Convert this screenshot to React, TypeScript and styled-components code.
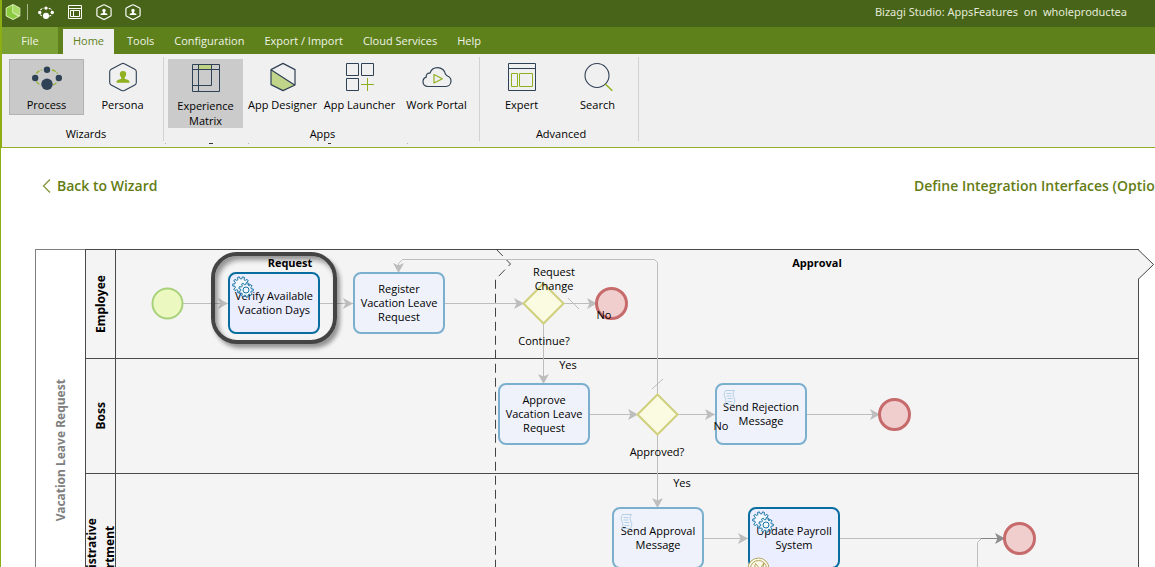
import React from "react";
import styled, { createGlobalStyle, css } from "styled-components";

const GlobalStyle = createGlobalStyle`
  *, *::before, *::after { box-sizing: border-box; }
  html, body { margin: 0; padding: 0; }
  body {
    font-family: "Open Sans", "Noto Sans", sans-serif;
    font-size: 11px;
    line-height: 14px;
    color: #000;
    background: #fff;
    overflow: hidden;
  }
  button { font: inherit; color: inherit; border: 0; background: none; padding: 0; }
  a { color: inherit; text-decoration: none; }
  svg { display: block; flex: none; }
`;

const NAVY = "#2f4154";
const GREEN = "#8fb01f";

const Shell = styled.div`
  display: flex;
  flex-direction: column;
  height: 100vh;
  overflow: hidden;
`;

const Header = styled.header`
  border-left: 2px solid #8cae14;
`;

const TitleBar = styled.div`
  display: flex;
  align-items: center;
  justify-content: space-between;
  height: 27px;
  padding: 0 28px 4px 3px;
  background: #486418;
`;

const QuickAccess = styled.div`
  display: flex;
  align-items: center;
  gap: 13px;
`;

const QuickButton = styled.button`
  width: 16px;
  height: 16px;
`;

const Divider = styled.span`
  width: 1px;
  height: 16px;
  margin: 0 -3px 0 -7px;
  background: #a9b78d;
`;

const WindowTitle = styled.h1`
  margin: 0;
  font-family: "Noto Sans", "Open Sans", sans-serif;
  font-size: 11px;
  font-weight: 400;
  color: #e4ead9;
  white-space: pre;
`;

const TabBar = styled.nav`
  display: flex;
  align-items: flex-end;
  height: 27px;
  background: #5e811c;
`;

const Tab = styled.button<{ $kind?: "file" | "active" }>`
  height: 25px;
  padding: 0 10px 2px;
  color: #f0f4e6;
  white-space: nowrap;
  ${(p) => p.$kind === "file" && css`
    height: 27px;
    width: 56px;
    margin-right: 5px;
    padding: 0;
    background: #7a9f35;
  `}
  ${(p) => p.$kind === "active" && css`
    width: 51px;
    margin-right: 3px;
    padding: 0 0 2px;
    background: #f0f0f0;
    color: #5e811c;
  `}
`;

const Ribbon = styled.div`
  position: relative;
  display: flex;
  height: 94px;
  padding-top: 3px;
  background: #f0f0f0;
  border-bottom: 1px solid #94ae2e;
`;

const RibbonGroup = styled.section<{ $wide: boolean }>`
  display: flex;
  flex-direction: column;
  justify-content: space-between;
  height: 84px;
  padding: 2px ${(p) => (p.$wide ? 5 : 3)}px 1px 4px;
  border-right: 1px solid #d2d2d2;
  &:first-child { padding-left: 7px; }
`;

const RibbonItems = styled.div<{ $wide: boolean }>`
  display: flex;
  align-items: flex-start;
  gap: ${(p) => (p.$wide ? 2 : 1)}px;
`;

const RibbonButton = styled.button<{ $state?: "pressed" | "selected" }>`
  display: flex;
  flex-direction: column;
  align-items: center;
  gap: 5px;
  width: 75px;
  min-height: 56px;
  padding: 3px 0 0;
  line-height: 15px;
  white-space: nowrap;
  ${(p) => p.$state === "pressed" && css`
    background: #c9c9c9;
    box-shadow: inset 0 0 0 1px #b2b2b2;
  `}
  ${(p) => p.$state === "selected" && css`
    gap: 6px;
    height: 69px;
    background: #cbcbcb;
    white-space: normal;
  `}
`;

const GroupLabel = styled.h2`
  margin: 0;
  padding-left: 3px;
  font-size: 11px;
  font-weight: 400;
  line-height: 12px;
  text-align: center;
`;

const RibbonMarks = styled.svg`
  position: absolute;
  left: 0;
  bottom: 2px;
`;

const Main = styled.main`
  flex: 1;
  min-height: 0;
  border-left: 1px solid #8cae14;
  overflow: hidden;
`;

const StepNav = styled.nav`
  display: flex;
  align-items: center;
  justify-content: space-between;
  height: 76px;
  margin-bottom: 25px;
  padding-left: 41px;
  font-size: 14px;
  line-height: 18px;
  font-weight: 600;
  color: #637c14;
`;

const BackLink = styled.a`
  display: flex;
  align-items: center;
  gap: 6px;
`;

const NextLink = styled.a`
  width: 241px;
  white-space: nowrap;
  overflow: hidden;
`;

const Canvas = styled.div`
  position: relative;
  width: 1120px;
  margin-left: 34px;
`;

const Pool = styled.section`
  display: flex;
  width: 1104px;
  border: 1px solid #808080;
  border-right: 0;
`;

const VerticalTitle = styled.h3<{ $muted?: boolean }>`
  display: flex;
  align-items: center;
  justify-content: center;
  flex: none;
  width: ${(p) => (p.$muted ? 49 : 30)}px;
  margin: 0;
  font-family: "Noto Sans", "Open Sans", sans-serif;
  font-size: 12px;
  line-height: 18px;
  font-weight: 700;
  color: ${(p) => (p.$muted ? "#808080" : "#000")};
  text-align: center;
  border-right: ${(p) => (p.$muted ? "0" : "1px solid #4a4a4a")};
  span { writing-mode: vertical-rl; transform: rotate(180deg); white-space: pre; }
`;

const Lanes = styled.div`
  flex: 1;
  margin-top: -1px;
  border: 1px solid #4a4a4a;
  border-bottom: 0;
  background: #f4f4f4;
`;

const Lane = styled.div<{ $height: number }>`
  display: flex;
  height: ${(p) => p.$height}px;
  border-bottom: 1px solid #4a4a4a;
`;

const Layer = styled.svg`
  position: absolute;
  left: 0;
  top: 0;
`;

const Task = styled.div<{ $x: number; $y: number; $strong?: boolean }>`
  position: absolute;
  left: ${(p) => p.$x}px;
  top: ${(p) => p.$y}px;
  display: flex;
  align-items: center;
  justify-content: center;
  width: 92px;
  height: 62px;
  border: 2px solid ${(p) => (p.$strong ? "#096d9f" : "#7bafce")};
  border-radius: 8px;
  background: ${(p) => (p.$strong ? "#ebeeff" : "#eff2fb")};
  text-align: center;
  white-space: pre;
`;

const TaskMarker = styled.svg`
  position: absolute;
  left: 2px;
  top: 2px;
`;

const Label = styled.span<{ $x: number; $y: number; $bold?: boolean }>`
  position: absolute;
  left: ${(p) => p.$x}px;
  top: ${(p) => p.$y}px;
  transform: translate(-50%, -50%);
  text-align: center;
  white-space: pre;
  font-weight: ${(p) => (p.$bold ? 700 : 400)};
`;

const Highlight = styled.div`
  position: absolute;
  left: 176px;
  top: 3px;
  width: 126px;
  height: 92px;
  border: 4px solid #444;
  border-radius: 26px;
  box-shadow: 3px 4px 4px rgba(0, 0, 0, 0.4), inset 3px 4px 5px rgba(0, 0, 0, 0.4);
`;

function ProcessIcon({ size = 30, mono = false }: { size?: number; mono?: boolean }) {
  const dot = mono ? "#fff" : NAVY;
  return (
    <svg width={size} height={size} viewBox="0 0 30 30" aria-hidden="true">
      <g fill="none" stroke={mono ? "#fff" : GREEN} strokeWidth={mono ? 2 : 1.3}>
        <path d="M4.5 11.5Q6 9 10 7.8M20 7.8Q24 9 25.5 11.5" strokeDasharray="4 1.5" />
        <path d="M4.5 19.5Q6 22 9 23M21 23Q24 22 25.5 19.5" strokeDasharray="4 1.5" />
      </g>
      <g fill={dot}>
        <circle cx="15" cy="7.7" r="3.2" />
        <circle cx="3.2" cy="16" r="3.2" />
        <circle cx="26.8" cy="16" r="3.2" />
        <circle cx="15" cy="22.3" r="5.7" />
      </g>
    </svg>
  );
}

function PersonaIcon({ size = 30, mono = false }: { size?: number; mono?: boolean }) {
  return (
    <svg width={size} height={size} viewBox="0 0 30 30" aria-hidden="true">
      <path
        d="M13.6 1.8Q15 1 16.4 1.8L26.8 7.2Q28.3 8 28.3 9.8V20.4Q28.3 22.2 26.8 23L16.4 28.4Q15 29.2 13.6 28.4L3.2 23Q1.7 22.2 1.7 20.4V9.8Q1.7 8 3.2 7.2Z"
        fill="none"
        stroke={mono ? "#fff" : NAVY}
        strokeWidth={mono ? 2.2 : 1.1}
      />
      <path
        d="M15 9a3.2 3.2 0 0 1 3.2 3.2c0 1.5-.8 2.3-1.5 3.2v1.4l3.6 1.2q1.2.6 1.2 2.8h-13q0-2.2 1.2-2.8l3.6-1.2v-1.4c-.7-.9-1.5-1.7-1.5-3.2A3.2 3.2 0 0 1 15 9Z"
        fill={mono ? "#fff" : GREEN}
      />
    </svg>
  );
}

function WindowIcon() {
  return (
    <svg width="16" height="16" viewBox="0 0 16 16" fill="none" stroke="#fff" aria-hidden="true">
      <path d="M1.5 1.5h13v13h-13zM1.5 4.5h13M3.5 6.5h3v6h-3zM6.5 6.5h6v6h-6z" />
    </svg>
  );
}

function MatrixIcon() {
  return (
    <svg width="30" height="30" viewBox="0 0 30 30" aria-hidden="true">
      <path d="M7.5 2.5h13v5h-13z" fill="#bfd383" />
      <path
        d="M1.5 2.5h27v27h-27zM1.5 7.5h27M7.5 2.5v27M20.5 2.5v21h-19"
        fill="none"
        stroke={NAVY}
      />
    </svg>
  );
}

function DesignerIcon() {
  return (
    <svg width="30" height="30" viewBox="0 0 30 30" strokeLinejoin="round" aria-hidden="true">
      <path d="M3 8L27 23.5L15 28.6L3 22.6Z" fill="#c0d48a" />
      <path d="M15 1.4L27 7.6V23L15 28.6L3 22.6V7.6ZM3 7.8L27 23.2" fill="none" stroke={NAVY} strokeWidth="1.2" />
    </svg>
  );
}

function LauncherIcon() {
  return (
    <svg width="30" height="30" viewBox="0 0 30 30" fill="none" aria-hidden="true">
      <path d="M1.5 1.5h12v12h-12zM16.5 1.5h12v12h-12zM1.5 16.5h12v12h-12z" stroke={NAVY} />
      <path d="M22.5 16v13M16 22.5h13" stroke={GREEN} />
    </svg>
  );
}

function CloudIcon() {
  return (
    <svg width="30" height="30" viewBox="0 0 30 30" fill="none" strokeLinejoin="round" aria-hidden="true">
      <path
        d="M6 24.5C2.8 24.5 1 22.3 1 19.8C1 17.4 2.5 15.7 4.3 15.2C3.6 12.6 5.6 10.8 8 11.2C9 7.6 12.2 5.6 15.6 5.6C19.6 5.6 22.9 8.4 23.4 12C24 13 24.5 13.4 25.6 14C28 15 29 17 29 19C29 22.2 26.8 24.5 23.8 24.5Z"
        stroke={NAVY}
        strokeWidth="1.2"
      />
      <path d="M12 12.5V21L20.4 16.8Z" stroke={GREEN} strokeWidth="1.2" />
    </svg>
  );
}

function ExpertIcon() {
  return (
    <svg width="30" height="30" viewBox="0 0 30 30" fill="none" aria-hidden="true">
      <path d="M1.5 1.5h27v27h-27zM1.5 6.5h27" stroke={NAVY} />
      <path d="M4.5 11.5h6v13h-6zM12.5 11.5h13v13h-13z" stroke={GREEN} />
    </svg>
  );
}

function SearchIcon() {
  return (
    <svg width="30" height="30" viewBox="0 0 30 30" fill="none" aria-hidden="true">
      <circle cx="14" cy="13.5" r="12" stroke={NAVY} strokeWidth="1.1" />
      <path d="M22.3 22L29.3 28.7" stroke={GREEN} strokeWidth="1.5" />
    </svg>
  );
}

function Logo() {
  return (
    <svg width="16" height="16" viewBox="0 0 16 16" aria-hidden="true">
      <path d="M8 .5L14.8 4V12L8 15.5L1.2 12V4Z" fill="#8bcb3f" stroke="#dff0c0" />
      <path d="M8 1V8.5L14 12" fill="none" stroke="#e9f6d6" strokeWidth="1.3" />
      <path d="M8 1L14.3 4.3V11.5L8 8.2Z" fill="#a9dc66" />
    </svg>
  );
}

const gearOutline = (cx: number, cy: number, outer: number, inner: number, teeth: number) => {
  const step = (Math.PI * 2) / teeth;
  const point = (r: number, a: number) => `${(cx + r * Math.cos(a)).toFixed(2)} ${(cy + r * Math.sin(a)).toFixed(2)}`;
  const parts: string[] = [];
  for (let i = 0; i < teeth; i++) {
    const a = i * step;
    parts.push(point(inner, a - step * 0.3), point(outer, a - step * 0.2), point(outer, a + step * 0.2), point(inner, a + step * 0.3));
  }
  return `M${parts.join("L")}Z`;
};

function GearMarker() {
  return (
    <TaskMarker width="22" height="22" viewBox="0 0 22 22" fill="#f4f8ff" stroke="#1974a5" aria-hidden="true">
      <path d={gearOutline(9, 9, 8.3, 6.2, 10)} />
      <path d={gearOutline(14, 14, 7.3, 5.4, 9)} />
      <circle cx="14" cy="14" r="3" />
    </TaskMarker>
  );
}

function ScriptMarker() {
  return (
    <TaskMarker width="22" height="22" viewBox="0 0 22 22" fill="none" stroke="#b4d0e4" aria-hidden="true">
      <path d="M6.5 3.5H15.5C13.5 6 13.8 8 15 10.5C16.2 13 16 15 14.5 17.5H5.5C7.5 15 7.2 13 6 10.5C4.8 8 5 6 6.5 3.5Z" />
      <path d="M7.5 6.5h5M7.5 9h5M8.5 11.5h5M8.5 14.5h5" />
    </TaskMarker>
  );
}

function Arrow({ x, y, down, color = "#bdbdbd" }: { x: number; y: number; down?: boolean; color?: string }) {
  return (
    <path
      d="M0 0L-10 -5.5L-7.5 0L-10 5.5Z"
      transform={`translate(${x} ${y})${down ? " rotate(90)" : ""}`}
      fill={color}
      stroke="none"
    />
  );
}

const quickActions = [
  { name: "Process wizard", icon: <ProcessIcon size={16} mono /> },
  { name: "Expert view", icon: <WindowIcon /> },
  { name: "Persona", icon: <PersonaIcon size={16} mono /> },
  { name: "Stakeholders", icon: <PersonaIcon size={16} mono /> },
];

const ribbonGroups: {
  title: string;
  items: { label: string; icon: React.ReactNode; state?: "pressed" | "selected" }[];
}[] = [
  {
    title: "Wizards",
    items: [
      { label: "Process", icon: <ProcessIcon />, state: "pressed" },
      { label: "Persona", icon: <PersonaIcon /> },
    ],
  },
  {
    title: "Apps",
    items: [
      { label: "Experience Matrix", icon: <MatrixIcon />, state: "selected" },
      { label: "App Designer", icon: <DesignerIcon /> },
      { label: "App Launcher", icon: <LauncherIcon /> },
      { label: "Work Portal", icon: <CloudIcon /> },
    ],
  },
  {
    title: "Advanced",
    items: [
      { label: "Expert", icon: <ExpertIcon /> },
      { label: "Search", icon: <SearchIcon /> },
    ],
  },
];

const lanes = [
  { name: "Employee", height: 109 },
  { name: "Boss", height: 115 },
  { name: "Administrative\nDepartment", height: 177 },
];

const tasks: { x: number; y: number; text: string; marker?: "gear" | "script" }[] = [
  { x: 193, y: 23, text: "Verify Available\nVacation Days", marker: "gear" },
  { x: 318, y: 23, text: "Register\nVacation Leave\nRequest" },
  { x: 463, y: 134, text: "Approve\nVacation Leave\nRequest" },
  { x: 680, y: 134, text: "Send Rejection\nMessage", marker: "script" },
  { x: 577, y: 258, text: "Send Approval\nMessage", marker: "script" },
  { x: 713, y: 258, text: "Update Payroll\nSystem", marker: "gear" },
];

const labels = [
  { x: 519, y: 30, text: "Request\nChange" },
  { x: 509, y: 92, text: "Continue?" },
  { x: 569, y: 66, text: "No" },
  { x: 533, y: 116, text: "Yes" },
  { x: 686, y: 177, text: "No" },
  { x: 622, y: 203, text: "Approved?" },
  { x: 647, y: 234, text: "Yes" },
];

function Diagram() {
  return (
    <Canvas>
      <Pool aria-label="Vacation Leave Request">
        <VerticalTitle $muted><span>Vacation Leave Request</span></VerticalTitle>
        <Lanes>
          {lanes.map((lane) => (
            <Lane key={lane.name} $height={lane.height}>
              <VerticalTitle><span>{lane.name}</span></VerticalTitle>
            </Lane>
          ))}
        </Lanes>
      </Pool>

      <Layer width="1120" height="402" viewBox="0 0 1120 402" fill="none" aria-hidden="true">
        <path d="M1103 .5L1118.5 15.5L1103 30.5Z" fill="#f4f4f4" />
        <path d="M1103.5 1V30" stroke="#f4f4f4" strokeWidth="2" />
        <path d="M1103 .5L1118.5 15.5L1103 30.5" stroke="#444" />
        <path d="M461.5 .5L475.5 15L460.5 30.5V402" stroke="#444" strokeDasharray="9 5" />
        <g stroke="#bdbdbd">
          <path d="M148 54.5H193M285 54.5H318M410 54.5H488M529 54.5H560M508.5 75V134" />
          <path d="M555 165.5H602M643 165.5H680M772 165.5H844M622.5 186V258" />
          <path d="M622.5 145V13.5L619.5 10.5H367.5L363.5 14.5V23" />
          <path d="M533 49L544 60M617 140L628 130M669 289.5H713M805 289.5H946M942.5 402V293.5L946.5 289.5" />
        </g>
        <path d="M946 289.5H969" stroke="#858585" />
        <Arrow x={193} y={54.5} />
        <Arrow x={318} y={54.5} />
        <Arrow x={489} y={54.5} />
        <Arrow x={562} y={54.5} />
        <Arrow x={603} y={165.5} />
        <Arrow x={680} y={165.5} />
        <Arrow x={845} y={165.5} />
        <Arrow x={713} y={289.5} />
        <Arrow x={970} y={289.5} color="#8c8c8c" />
        <Arrow x={363.5} y={24} down />
        <Arrow x={508.5} y={135} down />
        <Arrow x={622.5} y={259} down />
        <g fill="#fafbe0" stroke="#cfcf7e" strokeWidth="2">
          <path d="M508.5 34.5L528.5 54.5L508.5 74.5L488.5 54.5Z" />
          <path d="M622.5 145.5L642.5 165.5L622.5 185.5L602.5 165.5Z" />
        </g>
        <circle cx="132.5" cy="54.5" r="15" fill="#ebf9c1" stroke="#a8d17b" strokeWidth="2" />
        <g fill="#f1cece" stroke="#c66a6b" strokeWidth="3">
          <circle cx="576.5" cy="54.5" r="15" />
          <circle cx="859.5" cy="165.5" r="15" />
          <circle cx="984.5" cy="289.5" r="15" />
        </g>
      </Layer>

      {tasks.map((t) => (
        <Task key={t.text} $x={t.x} $y={t.y} $strong={t.marker === "gear"}>
          {t.text}
          {t.marker === "gear" && <GearMarker />}
          {t.marker === "script" && <ScriptMarker />}
        </Task>
      ))}

      <Layer width="1120" height="402" viewBox="0 0 1120 402" fill="#fbf8e6" stroke="#b3a763" aria-hidden="true">
        <circle cx="723.5" cy="319.5" r="10.5" />
        <circle cx="723.5" cy="319.5" r="8" />
        <path d="M718 325L720.5 314.5L725 320L729 314L726.5 325L722 320Z" />
      </Layer>

      <Label $x={255} $y={14} $bold>Request</Label>
      <Label $x={782} $y={14} $bold>Approval</Label>
      {labels.map((l) => (
        <Label key={`${l.text}-${l.x}`} $x={l.x} $y={l.y}>{l.text}</Label>
      ))}
      <Highlight />
    </Canvas>
  );
}

export default function App() {
  return (
    <Shell>
      <GlobalStyle />
      <Header>
        <TitleBar>
          <QuickAccess>
            <Logo />
            <Divider />
            {quickActions.map((a) => (
              <QuickButton key={a.name} type="button" aria-label={a.name}>{a.icon}</QuickButton>
            ))}
          </QuickAccess>
          <WindowTitle>{"Bizagi Studio: AppsFeatures  on  wholeproductea"}</WindowTitle>
        </TitleBar>
        <TabBar>
          <Tab type="button" $kind="file">File</Tab>
          <Tab type="button" $kind="active">Home</Tab>
          {["Tools", "Configuration", "Export / Import", "Cloud Services", "Help"].map((t) => (
            <Tab key={t} type="button">{t}</Tab>
          ))}
        </TabBar>
        <Ribbon>
          {ribbonGroups.map((g) => (
            <RibbonGroup key={g.title} $wide={g.items.length > 2}>
              <RibbonItems $wide={g.items.length > 2}>
                {g.items.map((item) => (
                  <RibbonButton key={item.label} type="button" $state={item.state}>
                    {item.icon}
                    <span>{item.label}</span>
                  </RibbonButton>
                ))}
              </RibbonItems>
              <GroupLabel>{g.title}</GroupLabel>
            </RibbonGroup>
          ))}
          <RibbonMarks width="420" height="3" viewBox="0 0 420 3" aria-hidden="true">
            <path d="M163 1h1v1h-1zM246 1h1v1h-1zM405 1h1v1h-1z" fill="#b5b5b5" />
            <path d="M207 1h4v1h-4zM326 1h3v1h-3z" fill="#333" />
          </RibbonMarks>
        </Ribbon>
      </Header>
      <Main>
        <StepNav>
          <BackLink href="#wizard">
            <svg width="9" height="14" viewBox="0 0 9 14" fill="none" stroke="#7c9433" aria-hidden="true">
              <path d="M8 .5L1.5 7L8 13.5" strokeWidth="1.2" />
            </svg>
            Back to Wizard
          </BackLink>
          <NextLink href="#interfaces">Define Integration Interfaces (Optional)</NextLink>
        </StepNav>
        <Diagram />
      </Main>
    </Shell>
  );
}
